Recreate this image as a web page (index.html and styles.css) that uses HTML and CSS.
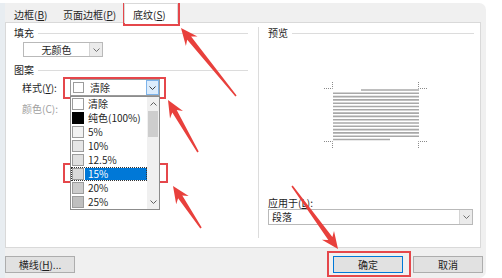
FILE: index.html
```html
<!DOCTYPE html>
<html lang="zh-CN">
<head>
<meta charset="utf-8">
<title>边框和底纹</title>
<link rel="stylesheet" href="styles.css">
</head>
<body>
<div class="dialog">
  <div class="tabs">
    <div class="tab t1">边框(<u>B</u>)</div>
    <div class="tab t2">页面边框(<u>P</u>)</div>
    <div class="tab t3">底纹(<u>S</u>)</div>
  </div>
  <div class="panel">
    <div class="left">
      <div class="gtitle"><span>填充</span><i></i></div>
      <div class="select fill-select">
        <span class="val center">无颜色</span>
        <span class="sbtn"><svg width="7" height="4" viewBox="0 0 7 4"><polyline points="0.5,0.5 3.5,3.5 6.5,0.5" fill="none" stroke="#707070" stroke-width="1"/></svg></span>
      </div>
      <div class="gtitle pattern"><span>图案</span><i></i></div>
      <div class="srow">
        <span class="lab">样式(<u>Y</u>):</span>
        <div class="combo-wrap">
          <div class="combo">
            <span class="sw sw-white"></span>
            <span class="ctext">清除</span>
            <span class="cbtn"><svg width="7" height="4" viewBox="0 0 7 4"><polyline points="0.5,0.5 3.5,3.5 6.5,0.5" fill="none" stroke="#404040" stroke-width="1"/></svg></span>
          </div>
          <div class="list">
            <div class="items">
              <div class="item"><span class="sw sw-white"></span><span class="lbl">清除</span></div>
              <div class="item"><span class="sw sw-black"></span><span class="lbl">纯色(100%)</span></div>
              <div class="item"><span class="sw sw-5"></span><span class="lbl">5%</span></div>
              <div class="item"><span class="sw sw-10"></span><span class="lbl">10%</span></div>
              <div class="item"><span class="sw sw-12"></span><span class="lbl">12.5%</span></div>
              <div class="item sel"><span class="sw sw-15"></span><span class="lbl">15%</span></div>
              <div class="item"><span class="sw sw-20"></span><span class="lbl">20%</span></div>
              <div class="item"><span class="sw sw-25"></span><span class="lbl">25%</span></div>
            </div>
            <div class="scroll">
              <span class="sarrow"><svg width="7" height="4" viewBox="0 0 7 4"><polyline points="0.5,3.5 3.5,0.5 6.5,3.5" fill="none" stroke="#606060" stroke-width="1"/></svg></span>
              <span class="thumb"></span>
              <span class="sarrow down"><svg width="7" height="4" viewBox="0 0 7 4"><polyline points="0.5,0.5 3.5,3.5 6.5,0.5" fill="none" stroke="#606060" stroke-width="1"/></svg></span>
            </div>
          </div>
        </div>
      </div>
      <div class="crow">颜色(C):</div>
    </div>
    <div class="right">
      <div class="gtitle"><span>预览</span><i></i></div>
      <svg class="preview" width="112" height="72" viewBox="0 0 112 72">
        <g fill="none" stroke="#8a8a8a" stroke-width="1" stroke-dasharray="1 1">
          <polyline points="4,8.5 12.5,8.5 12.5,2"/>
          <polyline points="98.5,2 98.5,8.5 107,8.5"/>
          <polyline points="4,61.5 12.5,61.5 12.5,68"/>
          <polyline points="107,61.5 98.5,61.5 98.5,68"/>
        </g>
        <g stroke="#a8a8a8" stroke-width="1.6">
          <line x1="41" y1="10" x2="99" y2="10"/>
          <line x1="13" y1="13.3" x2="99" y2="13.3"/>
          <line x1="13" y1="16.6" x2="99" y2="16.6"/>
          <line x1="13" y1="19.9" x2="99" y2="19.9"/>
          <line x1="13" y1="23.2" x2="99" y2="23.2"/>
          <line x1="13" y1="26.5" x2="99" y2="26.5"/>
          <line x1="13" y1="29.8" x2="99" y2="29.8"/>
          <line x1="13" y1="33.1" x2="99" y2="33.1"/>
          <line x1="13" y1="36.4" x2="99" y2="36.4"/>
          <line x1="13" y1="39.7" x2="99" y2="39.7"/>
          <line x1="13" y1="43" x2="99" y2="43"/>
          <line x1="13" y1="46.3" x2="99" y2="46.3"/>
          <line x1="13" y1="49.6" x2="99" y2="49.6"/>
          <line x1="13" y1="52.9" x2="99" y2="52.9"/>
          <line x1="13" y1="56.2" x2="99" y2="56.2"/>
          <line x1="13" y1="59.5" x2="70" y2="59.5"/>
        </g>
      </svg>
      <div class="apply-label">应用于(<u>L</u>):</div>
      <div class="select apply-select">
        <span class="val">段落</span>
        <span class="sbtn"><svg width="7" height="4" viewBox="0 0 7 4"><polyline points="0.5,0.5 3.5,3.5 6.5,0.5" fill="none" stroke="#707070" stroke-width="1"/></svg></span>
      </div>
    </div>
  </div>
  <div class="footer">
    <button class="btn">横线(<u>H</u>)...</button>
    <span class="spacer"></span>
    <button class="btn ok">确定</button>
    <button class="btn">取消</button>
  </div>
</div>

<div class="annot">
  <div class="box b1"></div>
  <div class="box b2"></div>
  <div class="box b3"></div>
  <div class="box b4"></div>
  <svg class="arrows" width="502" height="278" viewBox="0 0 502 278">
    <g fill="#e8403c">
      <polygon points="236.6,95.5 191.1,36.5 197.5,36.5 181,28 185.9,45.9 187.2,39.7 235.4,96.5"/>
      <polygon points="198.7,151.6 176.7,110.0 183.0,111.0 168,100 170.0,118.5 172.3,112.5 197.3,152.4"/>
      <polygon points="201.7,227.6 182.3,195.4 188.7,196.0 173,186 176.2,204.3 178.1,198.2 200.3,228.4"/>
      <polygon points="292.7,185.5 332.4,237.0 334.0,230.9 338,249 321.9,239.7 328.3,240.0 291.4,186.5"/>
    </g>
  </svg>
</div>
</body>
</html>
```

FILE: styles.css
```css
* { box-sizing: border-box; }
html, body { margin: 0; padding: 0; }
body {
  width: 502px;
  height: 278px;
  overflow: hidden;
  background: #ffffff;
  position: relative;
  font-family: "Noto Sans CJK SC", "Noto Sans", sans-serif;
  font-size: 10px;
  color: #1e1e1e;
}
u { text-decoration: underline; text-underline-offset: 1px; }

.dialog {
  margin-top: 3px;
  width: 486px;
  height: 275px;
  background: #f0f0f0;
  border-left: 5px solid #e8edf1;
  border-radius: 0 7px 7px 0;
  display: flex;
  flex-direction: column;
}

/* tabs */
.tabs { display: flex; align-items: flex-end; height: 19px; }
.tab { height: 17px; padding-top: 2px; line-height: 15px; white-space: nowrap; }
.t1 { width: 50px; padding-left: 9px; }
.t2 { width: 69px; padding-left: 8px; }
.t3 {
  width: 54px;
  height: 20px;
  padding-left: 8px;
  padding-top: 3px;
  margin-bottom: -1px;
  background: #fff;
  border: 1px solid #d9d9d9;
  border-bottom: none;
  position: relative;
  z-index: 1;
}

/* panel */
.panel {
  width: 476px;
  height: 226px;
  background: #fff;
  border: 1px solid #d9d9d9;
  display: grid;
  grid-template-columns: 252px 1fr;
}
.left { padding: 4px 10px 0 8px; }
.gtitle { display: flex; align-items: center; height: 12px; line-height: 12px; }
.gtitle i { flex: 1; height: 1px; background: #dcdcdc; margin-left: 4px; }

.select { display: flex; border: 1px solid #b9b9b9; background: #fff; }
.select .val { flex: 1; line-height: 13px; padding-left: 3px; white-space: nowrap; }
.select .val.center { text-align: center; padding-left: 0; }
.sbtn {
  width: 13px;
  border-left: 1px solid #d4d4d4;
  background: #ebebeb;
  display: flex;
  align-items: center;
  justify-content: center;
}
.fill-select { margin: 3px 0 0 9px; width: 80px; height: 15px; }

.pattern { margin-top: 7px; }
.srow { display: flex; margin-top: 3px; height: 17px; align-items: center; }
.lab { width: 56px; padding-left: 8px; white-space: nowrap; }
.combo-wrap { position: relative; width: 90px; height: 17px; }
.combo {
  display: flex;
  align-items: center;
  height: 17px;
  border: 1px solid #9a9a9a;
  background: #fff;
}
.combo .sw { margin-left: 2px; width: 11px; height: 11px; }
.ctext { flex: 1; margin-left: 6px; line-height: 13px; }
.cbtn {
  width: 13px;
  height: 15px;
  background: #dcecfc;
  border: 1px solid #7eb4ea;
  display: flex;
  align-items: center;
  justify-content: center;
}

.sw { display: block; flex: none; border: 1px solid #9c9c9c; }
.sw-white { background: #fff; }
.sw-black { background: #000; border-color: #000; }
.sw-5 { background: #f2f2f2; }
.sw-10 { background: #e6e6e6; }
.sw-12 { background: #e0e0e0; }
.sw-15 { background: #d9d9d9; }
.sw-20 { background: #cccccc; }
.sw-25 { background: #bfbfbf; }

.list {
  position: absolute;
  left: 0;
  top: 17px;
  width: 90px;
  height: 114px;
  border: 1px solid #8c8c8c;
  background: #fff;
  display: flex;
  z-index: 2;
}
.items { flex: 1; }
.item { height: 14px; display: flex; align-items: center; }
.item .sw { margin-left: 1px; width: 12px; height: 12px; }
.lbl { flex: 1; margin-left: 1px; padding-left: 3px; height: 12px; line-height: 12px; white-space: nowrap; }
.item.sel { outline: 1px dotted #333; outline-offset: -1px; }
.item.sel .lbl { background: #0078d7; color: #fff; }
.scroll { width: 12px; background: #f0f0f0; display: flex; flex-direction: column; }
.sarrow { height: 14px; display: flex; align-items: center; justify-content: center; }
.sarrow.down { margin-top: auto; }
.thumb { height: 26px; margin: 0 1px; background: #cdcdcd; }

.crow { margin-top: 7px; height: 12px; line-height: 12px; padding-left: 8px; color: #a0a0a0; }

.right {
  align-self: start;
  margin-top: 4px;
  height: 211px;
  border-left: 1px solid #dcdcdc;
  padding: 0 6px 0 9px;
}
.preview { display: block; margin: 41px 0 0 52px; }
.apply-label { margin-top: 45px; height: 12px; line-height: 12px; }
.apply-select { width: 205px; height: 16px; }
.apply-select .val { line-height: 14px; }

/* footer */
.footer { display: flex; padding: 8px 3px 0 0; }
.spacer { flex: 1; }
.btn {
  width: 70px;
  height: 17px;
  padding: 0;
  font: inherit;
  color: #1e1e1e;
  line-height: 15px;
  background: #e1e1e1;
  border: 1px solid #adadad;
}
.ok { border-color: #0078d7; margin-right: 10px; }

/* annotations */
.annot { position: absolute; left: 0; top: 0; width: 502px; height: 278px; pointer-events: none; }
.box { position: absolute; border: 2px solid #e5474b; }
.b1 { left: 123px; top: 3px; width: 57px; height: 23px; }
.b2 { left: 63px; top: 77px; width: 103px; height: 22px; }
.b3 { left: 63px; top: 163px; width: 105px; height: 20px; }
.b4 { left: 327px; top: 251px; width: 84px; height: 26px; }
.arrows { position: absolute; left: 0; top: 0; }
```
